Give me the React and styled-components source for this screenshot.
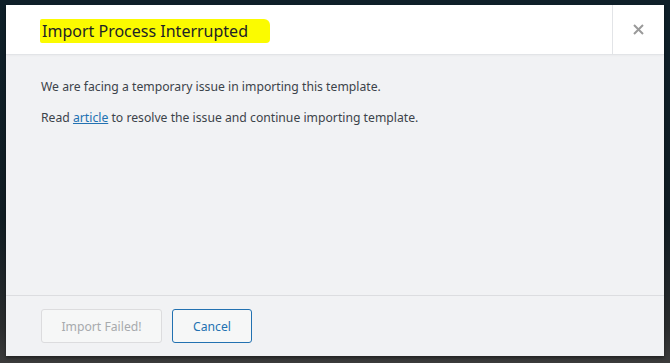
import React from 'react';
import styled, { createGlobalStyle } from 'styled-components';

const GlobalStyle = createGlobalStyle`
  html, body {
    margin: 0;
    padding: 0;
    width: 670px;
    height: 363px;
    overflow: hidden;
  }
  body {
    font-family: 'Noto Sans', 'Open Sans', sans-serif;
    background: linear-gradient(180deg, #0f2029 0%, #101c22 60%, #2a2c2d 90%, #3b3b3b 100%);
  }
`;

const Backdrop = styled.div`
  width: 670px;
  height: 363px;
  padding: 5px 6px 0 6px;
  box-sizing: border-box;
`;

const Modal = styled.div`
  width: 658px;
  height: 351px;
  display: flex;
  flex-direction: column;
  background: #f1f2f4;
  box-shadow: 0 2px 3px rgba(0, 0, 0, 0.4);
`;

const Header = styled.div`
  height: 49px;
  display: flex;
  align-items: stretch;
  background: #fff;
  border-bottom: 1px solid #e2e4e7;
  box-shadow: 0 1px 2px rgba(0, 0, 0, 0.03);
`;

const Title = styled.h1`
  flex: 1;
  margin: 0;
  padding: 2px 0 0 34px;
  display: flex;
  align-items: center;
  font-size: 16px;
  font-weight: 400;
  color: #1d2327;
`;

const Highlight = styled.span`
  background: #fbfb00;
  padding: 1px 22px 1px 2px;
  border-radius: 2px 6px 4px 2px;
`;

const CloseButton = styled.button`
  width: 52px;
  border: none;
  border-left: 1px solid #e2e4e7;
  background: #fff;
  display: flex;
  align-items: center;
  justify-content: center;
  padding: 0;
  cursor: pointer;
`;

const Body = styled.div`
  flex: 1;
  padding: 22px 35px 0;
  font-size: 12.2px;
  color: #3c434a;
`;

const Text = styled.p`
  margin: 0 0 12px;
  line-height: 19px;
`;

const Link = styled.a`
  color: #2271b1;
  text-decoration: underline;
`;

const Footer = styled.div`
  height: 61px;
  border-top: 1px solid #dcdde0;
  display: flex;
  align-items: center;
  gap: 10px;
  padding: 0 35px;
  box-sizing: border-box;
`;

const Button = styled.button`
  height: 34px;
  width: ${(p) => p.$w}px;
  padding: 0;
  font-family: inherit;
  font-size: 12.2px;
  border-radius: 3px;
  background: #f6f7f7;
  border: 1px solid ${(p) => (p.disabled ? '#dcdcde' : '#2271b1')};
  color: ${(p) => (p.disabled ? '#a7aaad' : '#2271b1')};
  cursor: ${(p) => (p.disabled ? 'default' : 'pointer')};
`;

function App() {
  return (
    <>
      <GlobalStyle />
      <Backdrop>
        <Modal>
          <Header>
            <Title>
              <Highlight>Import Process Interrupted</Highlight>
            </Title>
            <CloseButton aria-label="Close">
              <svg width="11" height="11" viewBox="0 0 11 11">
                <path d="M1 1 L10 10 M10 1 L1 10" stroke="#9a9a9a" strokeWidth="2" />
              </svg>
            </CloseButton>
          </Header>
          <Body>
            <Text>We are facing a temporary issue in importing this template.</Text>
            <Text>
              Read <Link href="#">article</Link> to resolve the issue and continue importing template.
            </Text>
          </Body>
          <Footer>
            <Button disabled $w={121}>Import Failed!</Button>
            <Button $w={80}>Cancel</Button>
          </Footer>
        </Modal>
      </Backdrop>
    </>
  );
}

export default App;
